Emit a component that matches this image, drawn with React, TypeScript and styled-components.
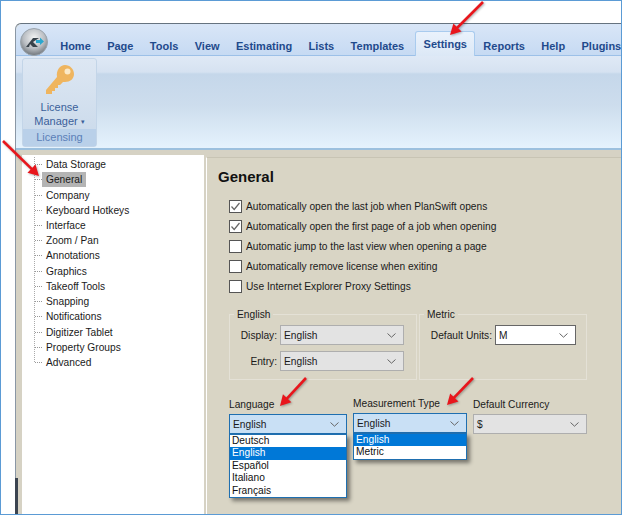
import React from 'react';
import styled, { createGlobalStyle } from 'styled-components';

const tabs = ['Home', 'Page', 'Tools', 'View', 'Estimating', 'Lists', 'Templates', 'Settings', 'Reports', 'Help', 'Plugins'];
const treeItems = ['Data Storage', 'General', 'Company', 'Keyboard Hotkeys', 'Interface', 'Zoom / Pan', 'Annotations', 'Graphics', 'Takeoff Tools', 'Snapping', 'Notifications', 'Digitizer Tablet', 'Property Groups', 'Advanced'];
const options = [
  { label: 'Automatically open the last job when PlanSwift opens', checked: true },
  { label: 'Automatically open the first page of a job when opening', checked: true },
  { label: 'Automatic jump to the last view when opening a page', checked: false },
  { label: 'Automatically remove license when exiting', checked: false },
  { label: 'Use Internet Explorer Proxy Settings', checked: false },
];

const Chevron = () => (
  <svg width="9" height="5" viewBox="0 0 9 5" fill="none">
    <path d="M0.5 0.5 L4.5 4.2 L8.5 0.5" stroke="#666" strokeWidth="1" />
  </svg>
);

const Arrow = ({ x1, y1, x2, y2 }: { x1: number; y1: number; x2: number; y2: number }) => {
  const angle = Math.atan2(y2 - y1, x2 - x1);
  const head = (offset: number, len: number) =>
    `${x2 - Math.cos(angle + offset) * len},${y2 - Math.sin(angle + offset) * len}`;
  return (
    <>
      <line x1={x1} y1={y1} x2={x2 - Math.cos(angle) * 6} y2={y2 - Math.sin(angle) * 6} stroke="#e8161c" strokeWidth="2.6" />
      <polygon points={`${x2},${y2} ${head(0.5, 12)} ${head(-0.5, 12)}`} fill="#e8161c" />
    </>
  );
};

const App: React.FC = () => {
  return (
    <>
      <GlobalStyle />
      <Page>
        <Window>
          <TabBar>
            <Logo>
              <svg width="30" height="30" viewBox="0 0 30 30">
                <defs>
                  <radialGradient id="orb" cx="50%" cy="35%" r="65%">
                    <stop offset="0%" stopColor="#f4f4f4" />
                    <stop offset="60%" stopColor="#b9bdc2" />
                    <stop offset="100%" stopColor="#6f757b" />
                  </radialGradient>
                </defs>
                <circle cx="15" cy="15" r="13.5" fill="url(#orb)" stroke="#9aa4ad" />
                <path d="M7 20 L14 11 L20 11 L14 15 L19 20 L14 20 L11 17 L10 20 Z" fill="#39424a" />
                <path d="M17 13 L21 13 L21 10.5 L25 14.5 L21 18 L21 16 L17 16 Z" fill="#2aa7cf" />
              </svg>
            </Logo>
            {tabs.map((tab) => (
              <Tab key={tab} $active={tab === 'Settings'}>{tab}</Tab>
            ))}
          </TabBar>
          <RibbonPanel>
            <RibbonGroup>
              <GroupBody>
                <svg width="30" height="32" viewBox="0 0 30 32">
                  <path
                    d="M20 1 C25 1 29 5 29 10 C29 15 25 18 20 18 L18 18 L15 21 L13 21 L13 24 L10 24 L10 27 L7 27 L7 30 L1 30 L1 26 L12 13 C11 6 15 1 20 1 Z"
                    fill="#efb55f"
                  />
                  <circle cx="22.5" cy="7.5" r="3" fill="#fbe9c8" />
                </svg>
                <GroupButtonText>License<br />Manager <Caret>▾</Caret></GroupButtonText>
              </GroupBody>
              <GroupLabel>Licensing</GroupLabel>
            </RibbonGroup>
          </RibbonPanel>
          <Content>
            <TreePanel>
              <TreeList>
                {treeItems.map((item) => (
                  <TreeRow key={item}>
                    <TreeDash />
                    <TreeLabel $selected={item === 'General'}>{item}</TreeLabel>
                  </TreeRow>
                ))}
              </TreeList>
            </TreePanel>
            <SettingsPanel>
              <Heading>General</Heading>
              <Inset>
                <CheckList>
                  {options.map((option) => (
                    <CheckRow key={option.label}>
                      <CheckBox>
                        {option.checked && (
                          <svg width="11" height="11" viewBox="0 0 11 11" fill="none">
                            <path d="M1.5 5.5 L4.2 8.5 L9.5 2" stroke="#666" strokeWidth="1.2" />
                          </svg>
                        )}
                      </CheckBox>
                      {option.label}
                    </CheckRow>
                  ))}
                </CheckList>
                <GroupRow>
                  <GroupBox $width={188}>
                    <Legend>English</Legend>
                    <FieldRow>
                      <FieldLabel $width={43}>Display:</FieldLabel>
                      <Combo $width={124}>English<Chevron /></Combo>
                    </FieldRow>
                    <FieldRow>
                      <FieldLabel $width={43}>Entry:</FieldLabel>
                      <Combo $width={124}>English<Chevron /></Combo>
                    </FieldRow>
                  </GroupBox>
                  <GroupBox $width={168}>
                    <Legend>Metric</Legend>
                    <FieldRow>
                      <FieldLabel $width={68}>Default Units:</FieldLabel>
                      <Combo $width={81} $variant="white">M<Chevron /></Combo>
                    </FieldRow>
                  </GroupBox>
                </GroupRow>
                <SelectRow>
                  <SelectColumn $width={118}>
                    <SelectLabel>Language</SelectLabel>
                    <Combo $width={118} $variant="focus">English<Chevron /></Combo>
                    <DropList>
                      <DropItem>Deutsch</DropItem>
                      <DropItem $selected>English</DropItem>
                      <DropItem>Español</DropItem>
                      <DropItem>Italiano</DropItem>
                      <DropItem>Français</DropItem>
                    </DropList>
                  </SelectColumn>
                  <SelectColumn $width={114} $raised>
                    <SelectLabel>Measurement Type</SelectLabel>
                    <Combo $width={114} $variant="focus">English<Chevron /></Combo>
                    <DropList>
                      <DropItem $selected>English</DropItem>
                      <DropItem>Metric</DropItem>
                    </DropList>
                  </SelectColumn>
                  <SelectColumn $width={114}>
                    <SelectLabel>Default Currency</SelectLabel>
                    <Combo $width={114}>$<Chevron /></Combo>
                  </SelectColumn>
                </SelectRow>
              </Inset>
            </SettingsPanel>
          </Content>
        </Window>
        <ThumbStrip />
        <ArrowLayer width="622" height="515" viewBox="0 0 622 515">
          <Arrow x1={483} y1={2} x2={450} y2={35} />
          <Arrow x1={3} y1={141} x2={39} y2={176} />
          <Arrow x1={306} y1={378} x2={280} y2={406} />
          <Arrow x1={473} y1={378} x2={447} y2={405} />
        </ArrowLayer>
      </Page>
    </>
  );
};

export default App;

const GlobalStyle = createGlobalStyle`
  html, body {
    margin: 0;
    padding: 0;
    background: #fff;
  }
  * {
    box-sizing: border-box;
  }
`;

const Page = styled.div`
  position: relative;
  width: 622px;
  height: 515px;
  overflow: hidden;
  padding: 22px 0 0 14px;
  background: #fff;
  border: 1px solid #5b9bd5;
  font-family: "Liberation Sans", Arial, sans-serif;
  font-size: 10.2px;
  color: #1a1a1a;
`;

const Window = styled.div`
  width: 620px;
  height: 492px;
  display: flex;
  flex-direction: column;
  border-top: 1px solid #66737f;
  border-left: 1px solid #8a97a5;
  border-top-left-radius: 6px;
  background: #d6d2c4;
`;

const TabBar = styled.div`
  height: 32px;
  flex-shrink: 0;
  display: flex;
  align-items: flex-end;
  padding-left: 3px;
  border-top-left-radius: 6px;
  background: linear-gradient(#d9e6f7, #c6daf3);
  border-bottom: 1px solid #9cc0e8;
`;

const Logo = styled.div`
  width: 33px;
  height: 30px;
  margin-bottom: -2px;
  flex-shrink: 0;
  position: relative;
  z-index: 1;
`;

const Tab = styled.div<{ $active?: boolean }>`
  height: ${(props) => (props.$active ? '25px' : '20px')};
  margin-bottom: -1px;
  padding: 4px 8.2px 0;
  font-size: 11px;
  font-weight: 700;
  white-space: nowrap;
  color: #1f4a8c;
  border-radius: 3px 3px 0 0;
  ${(props) =>
    props.$active &&
    `
    background: linear-gradient(#eaf2fc, #dce8f6);
    border: 1px solid #a9cbee;
    border-bottom: none;
    padding: 6px 7.2px 0;
    margin-left: 3px;
  `}
`;

const RibbonPanel = styled.div`
  height: 94px;
  flex-shrink: 0;
  padding: 2px 0 0 6px;
  background: linear-gradient(#dfe9f6 0, #d6e2f1 16px, #c5d7ea 18px, #cddded 50px, #e5f2fd 100%);
  border-bottom: 2px solid #9cc0de;
`;

const RibbonGroup = styled.div`
  width: 75px;
  height: 89px;
  display: flex;
  flex-direction: column;
  border: 1px solid #c3d5e8;
  border-radius: 3px;
  background: linear-gradient(#dde7f3, #c9d9ea);
`;

const GroupBody = styled.div`
  flex: 1;
  display: flex;
  flex-direction: column;
  align-items: center;
  padding-top: 5px;
`;

const GroupButtonText = styled.div`
  margin-top: 4px;
  text-align: center;
  font-size: 11px;
  line-height: 14px;
  color: #3b5f9a;
`;

const Caret = styled.span`
  font-size: 7px;
  vertical-align: 1px;
`;

const GroupLabel = styled.div`
  height: 18px;
  line-height: 17px;
  text-align: center;
  font-size: 11px;
  color: #5b7fb8;
  background: #b9d0e9;
`;

const Content = styled.div`
  flex: 1;
  min-height: 0;
  display: flex;
  padding: 5px 0 0 6px;
`;

const TreePanel = styled.div`
  width: 182px;
  flex-shrink: 0;
  padding-top: 2px;
  background: #fff;
`;

const TreeList = styled.div`
  margin-left: 12px;
  border-left: 1px dotted #aaa;
  height: 205px;
  display: flex;
  flex-direction: column;
`;

const TreeRow = styled.div`
  height: 15.22px;
  flex-shrink: 0;
  display: flex;
  align-items: center;
`;

const TreeDash = styled.div`
  width: 7px;
  border-top: 1px dotted #999;
`;

const TreeLabel = styled.span<{ $selected?: boolean }>`
  padding: 0 4px;
  line-height: 15px;
  white-space: nowrap;
  background: ${(props) => (props.$selected ? '#b4b4b4' : 'transparent')};
`;

const SettingsPanel = styled.div`
  flex: 1;
  margin: 2px 0 0 2px;
  padding: 10px 0 0 12px;
  background: #d9d5c5;
  border-left: 1px solid #fff;
  border-top: 1px solid #c8c4b4;
`;

const Heading = styled.h2`
  margin: 0 0 15px -1px;
  font-size: 15px;
  line-height: 17px;
  font-weight: 700;
  color: #111;
`;

const Inset = styled.div`
  margin-left: 10px;
`;

const CheckList = styled.div`
  display: flex;
  flex-direction: column;
  gap: 7px;
`;

const CheckRow = styled.label`
  height: 13px;
  display: flex;
  align-items: center;
  gap: 4px;
  white-space: nowrap;
`;

const CheckBox = styled.span`
  width: 13px;
  height: 13px;
  display: flex;
  align-items: center;
  justify-content: center;
  background: #fff;
  border: 1px solid #555;
`;

const GroupRow = styled.div`
  display: flex;
  gap: 2px;
  margin-top: 15px;
`;

const GroupBox = styled.fieldset<{ $width: number }>`
  width: ${(props) => props.$width}px;
  height: 72px;
  margin: 0;
  padding: 1px 0 0 6px;
  border: 1px solid #e4e1d6;
  display: flex;
  flex-direction: column;
`;

const Legend = styled.legend`
  padding: 0 3px;
  margin-left: -2px;
  line-height: 13px;
`;

const FieldRow = styled.div`
  display: flex;
  align-items: center;
  gap: 1px;
  height: 26px;
`;

const FieldLabel = styled.span<{ $width: number }>`
  width: ${(props) => props.$width}px;
  padding-right: 2px;
  text-align: right;
  white-space: nowrap;
`;

const comboColors = {
  grey: 'background: #e3e3e3; border: 1px solid #aeaeae;',
  white: 'background: #fff; border: 1px solid #666;',
  focus: 'background: #c9e0f5; border: 1px solid #1f6fb0;',
};

const Combo = styled.div<{ $width: number; $variant?: keyof typeof comboColors }>`
  width: ${(props) => props.$width}px;
  height: 20px;
  flex-shrink: 0;
  display: flex;
  align-items: center;
  justify-content: space-between;
  padding: 0 7px 0 3px;
  ${(props) => comboColors[props.$variant || 'grey']}
`;

const SelectRow = styled.div`
  display: flex;
  margin-top: 18px;
  gap: 6px;
`;

const SelectColumn = styled.div<{ $width: number; $raised?: boolean }>`
  position: relative;
  width: ${(props) => props.$width}px;
  margin-top: ${(props) => (props.$raised ? '-1px' : '0')};
`;

const SelectLabel = styled.div`
  height: 16px;
  line-height: 13px;
  white-space: nowrap;
`;

const DropList = styled.div`
  position: absolute;
  top: 36px;
  left: 0;
  right: 0;
  background: #fff;
  border: 1px solid #1f6fb0;
  box-shadow: 3px 3px 4px rgba(0, 0, 0, 0.45);
  z-index: 2;
`;

const DropItem = styled.div<{ $selected?: boolean }>`
  height: 12.4px;
  line-height: 12.4px;
  padding-left: 2px;
  color: ${(props) => (props.$selected ? '#fff' : '#111')};
  background: ${(props) => (props.$selected ? '#0078d7' : 'transparent')};
`;

const ThumbStrip = styled.div`
  position: absolute;
  left: 14px;
  bottom: 0;
  width: 3px;
  height: 36px;
  background: #3b4450;
`;

const ArrowLayer = styled.svg`
  position: absolute;
  top: -1px;
  left: -1px;
  pointer-events: none;
  z-index: 5;
  filter: drop-shadow(1px 1px 1px rgba(0, 0, 0, 0.3));
`;
